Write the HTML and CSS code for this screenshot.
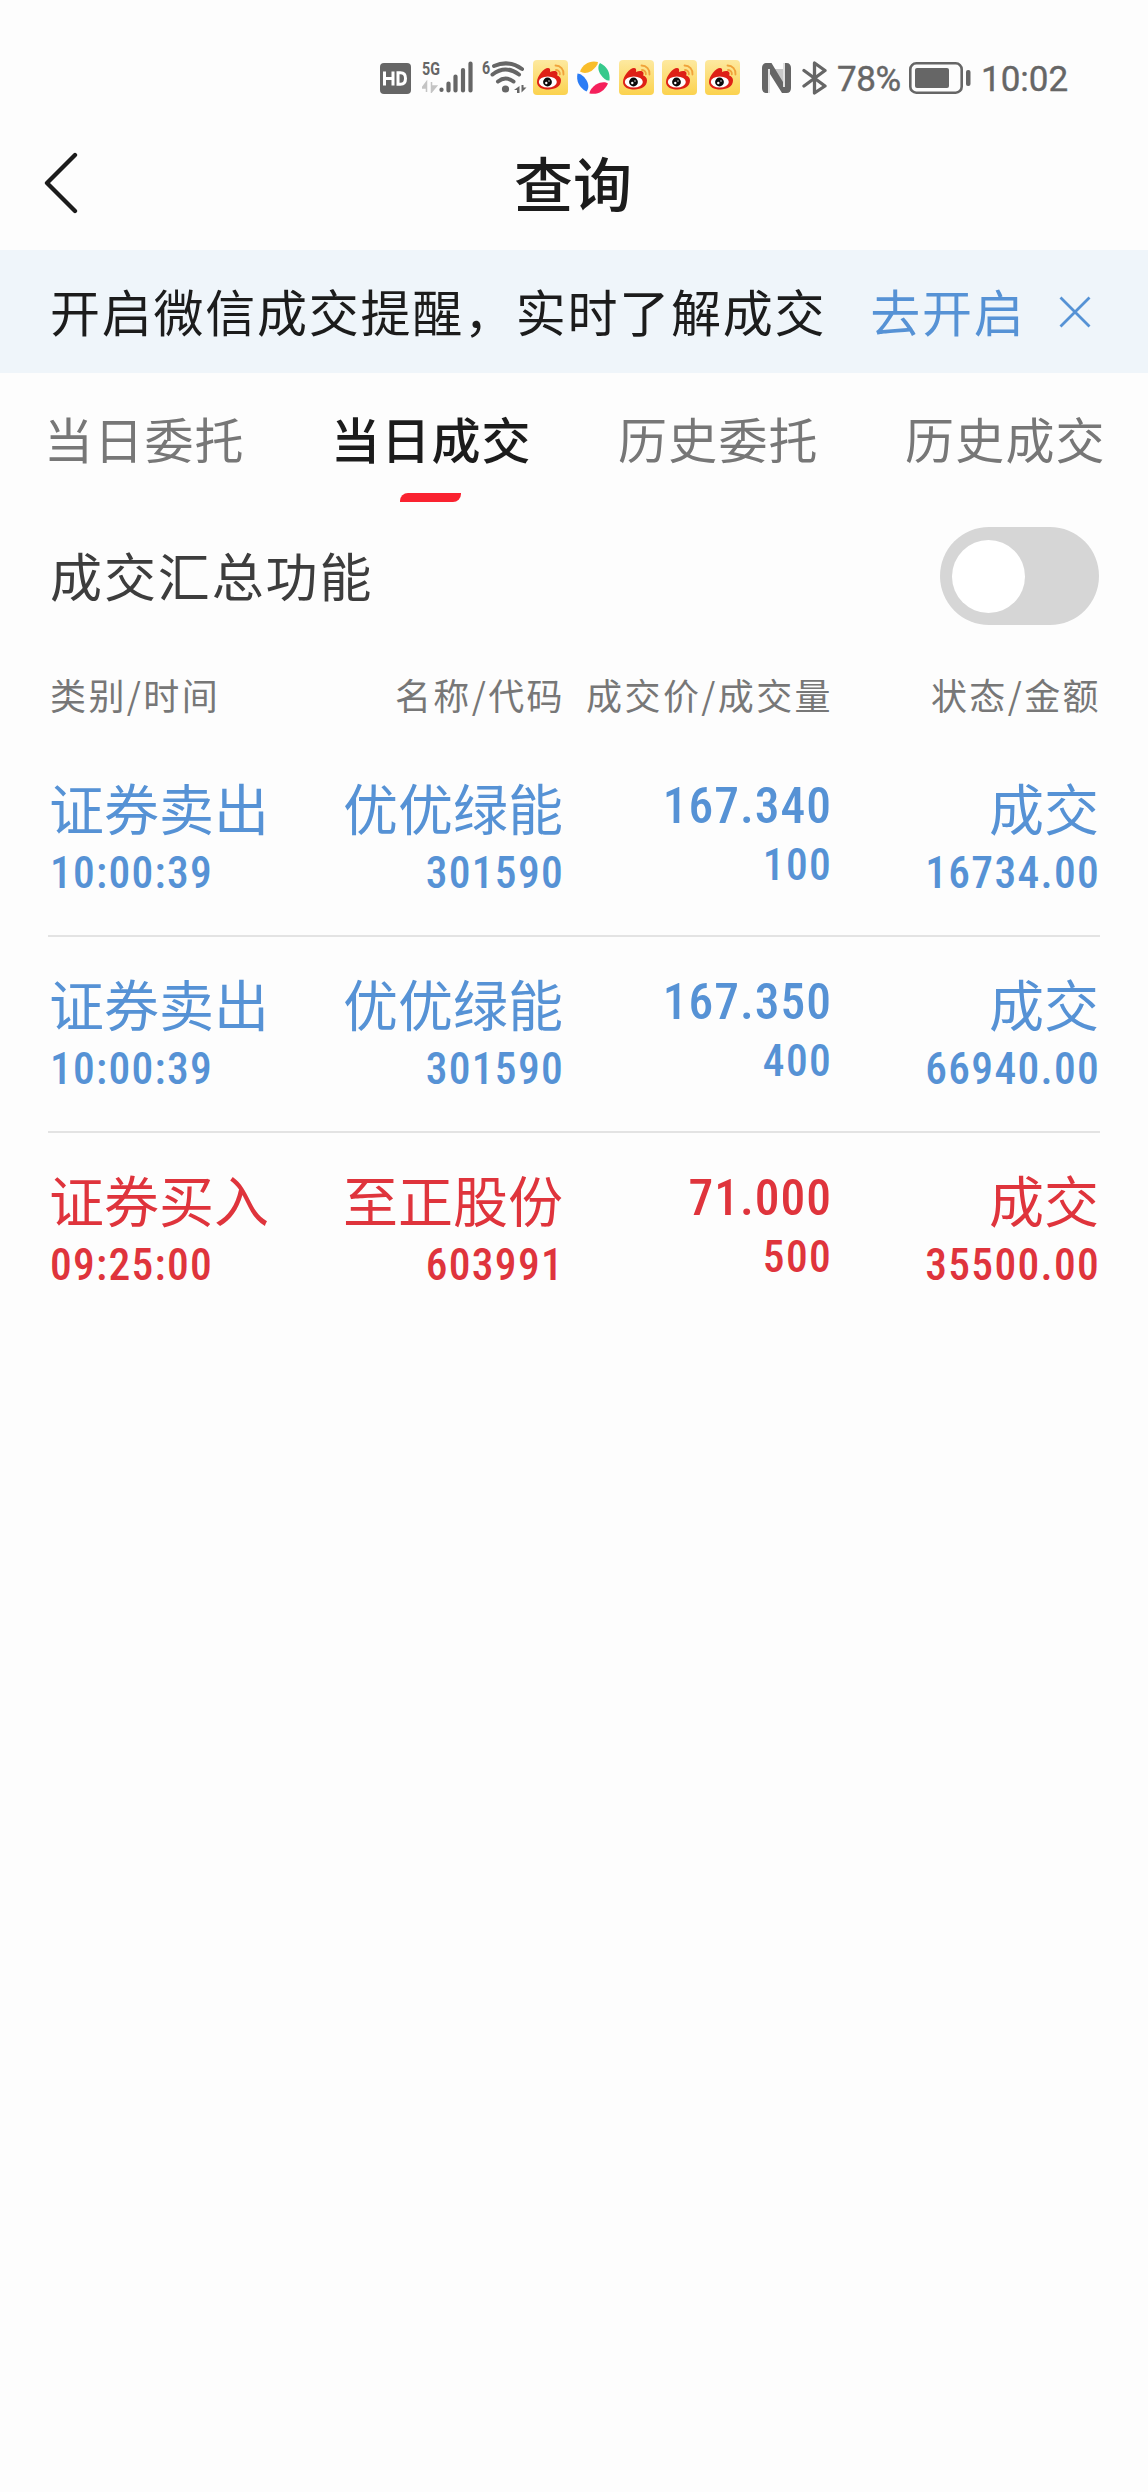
FILE: index.html
```html
<!DOCTYPE html>
<html lang="zh-CN">
<head>
<meta charset="utf-8">
<title>查询</title>
<link rel="stylesheet" href="styles.css">
</head>
<body>
<svg class="defs" width="0" height="0" aria-hidden="true">
  <defs>
    <linearGradient id="gold" x1="0" y1="0" x2="0" y2="1"><stop offset="0" stop-color="#fde9a0"/><stop offset="1" stop-color="#fbd24e"/></linearGradient>
    <symbol id="weibo" viewBox="0 0 35 35">
      <rect width="35" height="35" rx="4" fill="url(#gold)"/>
      <path d="M4 22C4 16 11 8 15 8c2 0 2.500 1.500 2 4 3-1.500 7-1.500 7.500 1 .2 1.200-.3 2-.3 2.600 2.500 1 3.800 2.400 3.800 5C28 26.500 22 29.500 15.500 29.500 9 29.500 4 27 4 22z" fill="#de2016"/>
      <ellipse cx="14.800" cy="22" rx="9" ry="5.600" fill="#fff"/>
      <circle cx="14.500" cy="22" r="4.400" fill="#0a0a0a"/>
      <circle cx="13.300" cy="23" r="1.200" fill="#fff"/><circle cx="16" cy="21" r=".7" fill="#fff"/>
      <path d="M22.500 5.500c5 0 8.500 4 8 9M23 10c2.500 0 4.200 2 3.800 4.300" fill="none" stroke="#f0a23a" stroke-width="1.800" stroke-linecap="round"/>
    </symbol>
  </defs>
</svg>

<header class="status">
  <svg class="hd" width="31" height="31" viewBox="0 0 31 31"><rect width="31" height="31" rx="4" fill="#666"/><path d="M4.500 8.500v14M13 8.500v14M4.500 15.500H13M18 9.800v11.400h2.500c3.500 0 5-2.200 5-5.700s-1.500-5.700-5-5.700z" fill="none" stroke="#fff" stroke-width="3"/></svg>
  <div class="cell">
    <span class="net">5G</span>
    <svg width="51" height="32" viewBox="0 0 51 32"><path d="M4.500 21v10M4.500 21L0 27h4.500zM9.500 21v10M9.500 31l5-6h-5z" fill="#c4c4c4" stroke="#c4c4c4" stroke-width="1.500"/><path d="M19.500 28.500v.500M26.500 22.500V29.500M33.500 15.500v14M41 9v20.500M48.500 2.500v27" stroke="#666" stroke-width="4.200" stroke-linecap="round"/></svg>
  </div>
  <div class="wifi">
    <span class="gen">6</span>
    <svg width="45" height="33" viewBox="0 0 45 33"><g fill="none" stroke="#666" stroke-width="4" stroke-linecap="round"><path d="M12 5Q27-1.500 40 8M10.500 13.500Q23.500 3.500 37 13.500M16 20.500Q23.500 14.500 31.500 20.500"/></g><circle cx="23.500" cy="28" r="3.600" fill="#666"/><path d="M37.500 25v7h-2.500v-3h-3zM39.500 24v7.500l5-5h-3V24z" fill="#666"/></svg>
  </div>
  <div class="apps">
    <svg width="35" height="35"><use href="#weibo"/></svg>
    <svg width="35" height="35" viewBox="0 0 35 35"><path d="M4 11.500C7 4 14 0 22 2c0 3-3 6-6.500 9C11 13.500 7 13.500 4 11.500z" fill="#f9bd2b"/><path d="M24 3c7 3.500 10.500 9.500 9.500 17.500-3 .5-6-2-8.500-5.500C22 11 21.500 6 24 3z" fill="#36c98c"/><path d="M32 23.500c-4 8.500-10.500 11.500-18.500 10 0-3 3-6.500 6.500-9 4.500-2.500 9-3 12-1z" fill="#f5205b"/><path d="M10.500 31.500C3 27.500 0 21 1.500 13.500c3 0 6.500 3 8.500 6 3 4.500 3 9 .5 12z" fill="#2a7cf5"/></svg>
    <svg width="35" height="35"><use href="#weibo"/></svg>
    <svg width="35" height="35"><use href="#weibo"/></svg>
    <svg width="35" height="35"><use href="#weibo"/></svg>
  </div>
  <svg class="nfc" width="29" height="30" viewBox="0 0 29 30"><path d="M5 0h4.500L21 19V0h3.500C27.500 0 29 2 29 5v20c0 3-1.500 5-4.500 5H20L8 11v19H5c-3.500 0-5-2-5-5V5c0-3 1.500-5 5-5z" fill="#666"/><path d="M7 6v24M22 0v24" fill="none" stroke="#fff" stroke-width="1.600"/><path d="M9 6l12 19V6z" fill="#666" opacity=".35"/></svg>
  <svg class="bt" width="26" height="34" viewBox="0 0 26 34"><path d="M2 9.500l21 15.500-10.500 7V2L23 9.500 2 25" fill="none" stroke="#666" stroke-width="3.300" stroke-linejoin="round" stroke-linecap="round"/></svg>
  <span class="pct">78%</span>
  <svg class="batt" width="62" height="32" viewBox="0 0 62 32"><rect x="1.300" y="1.300" width="51.400" height="29.400" rx="6" fill="none" stroke="#666" stroke-width="2.600"/><rect x="6" y="6" width="34" height="20" rx="2" fill="#666"/><rect x="57" y="8" width="4.500" height="16" rx="2" fill="#666"/></svg>
  <span class="clock">10:02</span>
</header>

<nav class="bar">
  <svg class="back" width="36" height="62" viewBox="0 0 36 62"><path d="M33 3L5 31l28 28" fill="none" stroke="#1c1c1c" stroke-width="4.300" stroke-linecap="round" stroke-linejoin="round"/></svg>
  <h1>查询</h1>
</nav>

<section class="banner">
  <span class="tip">开启微信成交提醒，实时了解成交</span>
  <a class="open">去开启</a>
  <svg width="32" height="32" viewBox="0 0 32 32"><path d="M1.500 1.500l29 29M30.500 1.500l-29 29" stroke="#5692d5" stroke-width="2.800"/></svg>
</section>

<nav class="tabs">
  <span>当日委托</span><span class="on">当日成交</span><span>历史委托</span><span>历史成交</span>
</nav>

<section class="summary">
  <span>成交汇总功能</span>
  <i class="switch"></i>
</section>

<div class="grid head">
  <span>类别/时间</span><span>名称/代码</span><span>成交价/成交量</span><span>状态/金额</span>
</div>

<main>
  <article class="grid row sell">
    <div><b>证券卖出</b><em>10:00:39</em></div>
    <div><b>优优绿能</b><em>301590</em></div>
    <div class="num"><em class="price">167.340</em><em>100</em></div>
    <div><b>成交</b><em>16734.00</em></div>
  </article>
  <article class="grid row sell">
    <div><b>证券卖出</b><em>10:00:39</em></div>
    <div><b>优优绿能</b><em>301590</em></div>
    <div class="num"><em class="price">167.350</em><em>400</em></div>
    <div><b>成交</b><em>66940.00</em></div>
  </article>
  <article class="grid row buy">
    <div><b>证券买入</b><em>09:25:00</em></div>
    <div><b>至正股份</b><em>603991</em></div>
    <div class="num"><em class="price">71.000</em><em>500</em></div>
    <div><b>成交</b><em>35500.00</em></div>
  </article>
</main>
</body>
</html>
```

FILE: styles.css
```css
* { box-sizing: border-box; }
body {
  margin: 0;
  width: 1148px;
  min-height: 2492px;
  background: #fdfdfd;
  color: #1c1c1c;
  font-family: "Noto Sans CJK SC", sans-serif;
  white-space: nowrap;
}
.defs { display: block; height: 0; }
svg { display: block; flex: none; }

.status {
  height: 125px;
  padding: 60px 0 0 380px;
  display: flex;
  align-items: flex-start;
  color: #666;
  font-family: Roboto, sans-serif;
}
.hd { margin-top: 3px; }
.cell, .wifi { position: relative; }
.cell { margin: 1px 0 0 11px; }
.net, .gen {
  position: absolute;
  font-weight: 700;
  font-size: 19px;
  line-height: 16px;
  transform: scaleX(.75);
  transform-origin: 0 0;
}
.net { left: 0; top: 0; }
.wifi { margin: 1px 0 0 9px; }
.gen { left: 0; top: -1px; }
.apps { display: flex; gap: 8px; margin-left: 6px; }
.nfc { margin: 3px 0 0 22px; }
.bt { margin: 1px 0 0 11px; }
.pct, .clock { font-size: 35px; line-height: 39px; -webkit-text-stroke: .4px #666; }
.pct { width: 66px; margin-left: 9px; letter-spacing: -.4px; }
.batt { margin: 2px 0 0 6px; }
.clock { margin-left: 10px; }

.bar {
  height: 125px;
  position: relative;
  display: flex;
  justify-content: center;
  padding-top: 15px;
}
.back { position: absolute; left: 42px; top: 27px; }
h1 { margin: 0 2px 0 0; font-size: 59px; line-height: 84px; font-weight: 500; }

.banner {
  height: 123px;
  padding: 0 57px 0 50px;
  background: #eff5fa;
  display: flex;
  align-items: center;
  font-size: 50px;
  letter-spacing: 1.750px;
}
.banner span, .open { margin-top: -3px; }
.open { margin-left: 44px; color: #5692d5; }
.banner svg { margin-left: auto; }

.tabs {
  height: 137px;
  padding: 30px 0 0 44px;
  display: grid;
  grid-template-columns: repeat(4, 287px);
  font-size: 49px;
  line-height: 70px;
  letter-spacing: 1.200px;
  color: #777;
}
.on { color: #1c1c1c; font-weight: 500; }
.on::after {
  content: "";
  display: block;
  width: 61px;
  height: 9px;
  margin: 20px 0 0 69px;
  background: #fa2230;
  border-radius: 8px 0 8px 0;
}

.summary {
  height: 132px;
  padding: 0 49px 0 50px;
  display: flex;
  align-items: center;
  justify-content: space-between;
  font-size: 52px;
  letter-spacing: 1.900px;
  color: #3d3d3d;
}
.summary span { margin-top: -3px; }
.switch {
  width: 159px;
  height: 98px;
  padding: 13px 12px;
  border-radius: 49px;
  background: #d6d6d6;
}
.switch::after {
  content: "";
  display: block;
  width: 73px;
  height: 73px;
  border-radius: 50%;
  background: #fff;
}

.grid {
  margin: 0 48px;
  display: grid;
  grid-template-columns: 214px 301px 268px 268px;
  text-align: right;
}
.grid > :first-child { text-align: left; padding-left: 2px; }
.head {
  height: 99px;
  padding-top: 26px;
  font-size: 36px;
  line-height: 52px;
  letter-spacing: 2.400px;
  color: #777;
}
.head span { margin-right: -2px; }
.row {
  height: 196px;
  padding-top: 29px;
  border-bottom: 2px solid #e3e3e3;
}
.row:last-child { border: 0; }
.sell { color: #5692d5; }
.buy { color: #df343c; }
b, em { display: block; font-style: normal; font-weight: 400; }
b { margin-left: -1px; font-size: 55px; line-height: 72px; letter-spacing: 0; }
em {
  margin: 5px -1px 0 0;
  font-family: Roboto, sans-serif;
  font-stretch: 85%;
  font-weight: 500;
  font-size: 43.500px;
  line-height: 50px;
  letter-spacing: 1.300px;
}
b + em { margin-top: 7px; }
.price {
  margin-top: 6px;
  font-size: 49.500px;
  line-height: 60px;
  letter-spacing: 1px;
}
```
